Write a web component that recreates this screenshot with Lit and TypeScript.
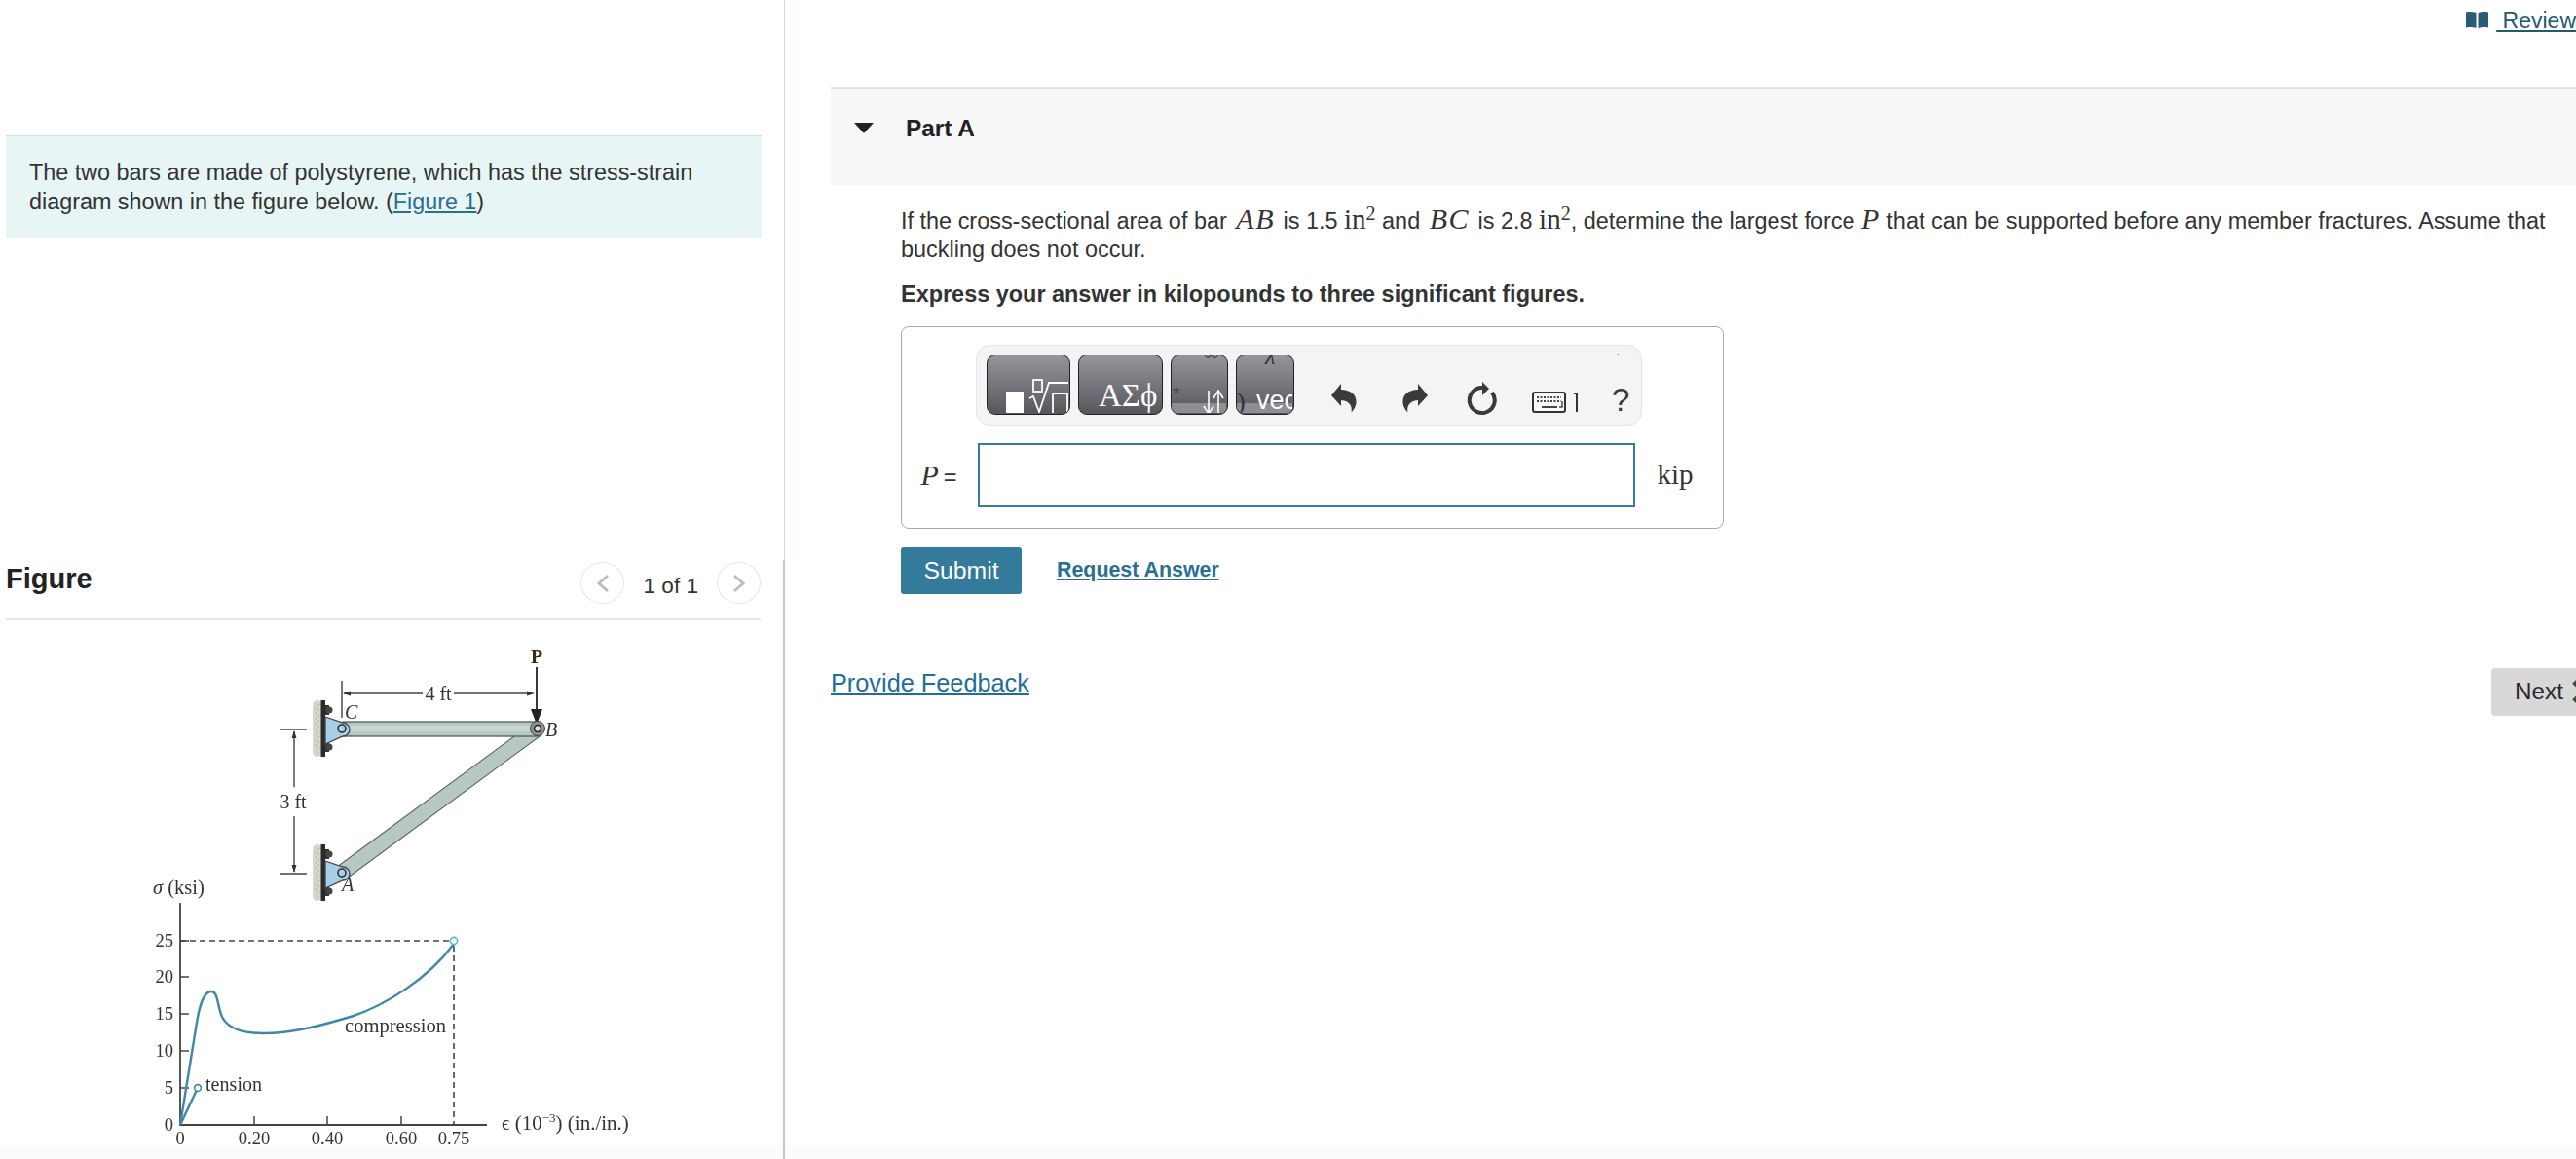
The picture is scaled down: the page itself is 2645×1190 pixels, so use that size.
import { LitElement, html, css, svg } from "lit";
import { customElement } from "lit/decorators.js";

const wall = (top: number) => svg`
  <rect x="321" y="${top + 1}" width="10" height="58" rx="5" fill="#d6d6cf"/>
  <path d="M324 ${top + 8}v44M327 ${top + 5}v50" stroke="#b5b5ae" stroke-width="1.4" stroke-dasharray="1.5 4"/>
  <rect x="329.5" y="${top + 1}" width="4.5" height="58" fill="#2b2b2b"/>
  <rect x="334" y="${top + 6}" width="4" height="10" fill="#333"/>
  <rect x="334" y="${top + 44}" width="4" height="10" fill="#333"/>
  <circle cx="338" cy="${top + 11}" r="3.5" fill="#444"/>
  <circle cx="338" cy="${top + 49}" r="3.5" fill="#444"/>
  <path d="M334 ${top + 18}L352 ${top + 24}A6.5 6.5 0 0 1 352 ${top + 38}L334 ${top + 46}Z" fill="#a9cfe6" stroke="#444" stroke-width="1.3"/>
  <circle cx="351" cy="${top + 30}" r="4" fill="none" stroke="#333" stroke-width="1.6"/>
`;

@customElement("app-root")
export class AppRoot extends LitElement {
  static styles = css`
    :host {
      display: block;
      height: 100vh;
      overflow: hidden;
      font-family: "Liberation Sans", Arial, sans-serif;
      font-size: 23.45px;
      line-height: 29.8px;
      color: #333;
    }
    * { box-sizing: border-box; }
    a { color: #2a6f92; text-decoration: underline; }
    .page {
      display: flex;
      height: 100%;
      background: linear-gradient(#fff calc(100% - 13px), #fbfbfb calc(100% - 13px));
    }
    .left { width: 804px; flex: none; padding-top: 139px; }
    .divider { width: 2px; flex: none; display: flex; flex-direction: column; }
    .div-top { height: 575px; width: 1px; margin-left: 1px; background: #ccd6e0; }
    .div-bottom { flex: 1; width: 2px; background: #bccbdc; }
    .right { flex: 1; min-width: 0; padding-left: 47px; overflow: hidden; }

    .intro {
      margin-left: 6px;
      width: 776px;
      height: 105px;
      padding: 23px 24px 0;
      background: #e7f5f5;
      border-top: 1px solid #d7e4e4;
      font-size: 23.35px;
    }
    .fig-head {
      margin: 333px 0 0 6px;
      width: 775px;
      height: 60px;
      display: flex;
      border-bottom: 2px solid #e6e6e6;
    }
    .fig-head h2 {
      margin: 0 auto 0 0;
      font-size: 29px;
      line-height: 34px;
      font-weight: 700;
      color: #222;
    }
    .pager { display: flex; align-items: flex-start; gap: 19px; }
    .pager span { margin-top: 10px; color: #333; font-size: 22.6px; }
    .circle {
      width: 45px;
      height: 43px;
      border: 1px solid #e6e6e6;
      border-radius: 50%;
      display: flex;
      align-items: center;
      justify-content: center;
    }
    .figure { display: block; margin-top: 3px; }
    .blur { filter: blur(0.7px); }
    .s { font-family: "Liberation Serif", serif; fill: #333; }

    .review-row {
      height: 89px;
      display: flex;
      justify-content: flex-end;
      align-items: flex-start;
      padding-top: 7px;
      font-size: 23px;
      line-height: 28px;
    }
    .review-row svg { margin: 5px 8px 0 0; }
    .review-row a { color: #25596f; white-space: pre; }

    .part-head {
      height: 101px;
      background: #f8f8f8;
      border-top: 2px solid #e2e2e2;
      display: flex;
      padding: 26px 0 0 24px;
      font-weight: 700;
      font-size: 24.4px;
      color: #222;
    }
    .part-head svg { margin: 9px 33px 0 0; }

    .body { padding: 22.5px 25px 0 72px; }
    .body p { margin: 0; color: #333; white-space: normal; }
    .strong { margin-top: 16px !important; font-weight: 700; }
    .m { font-family: "Liberation Serif", serif; font-style: italic; font-size: 30px; letter-spacing: 1.5px; line-height: 0; margin: 0 2px 0 3px; }
    .m.p { margin: 0; }
    .u { font-family: "Liberation Serif", serif; font-size: 29px; line-height: 0; }
    sup { font-family: "Liberation Serif", serif; font-size: 20px; line-height: 0; }

    .answer {
      margin-top: 17px;
      width: 845px;
      height: 208px;
      border: 1.5px solid #aaa;
      border-radius: 8px;
      padding: 18.5px 0 0 75.5px;
    }
    .toolbar {
      width: 684px;
      height: 83px;
      background: #f4f4f4;
      border: 1px solid #e5e5e5;
      border-radius: 14px;
      padding: 9px 0 0 10px;
      display: flex;
    }
    .btn {
      height: 62px;
      flex: none;
      margin-right: 8px;
      border: 1.5px solid #222;
      border-radius: 9px;
      overflow: hidden;
      background: linear-gradient(#96959d, #56565a);
      display: block;
    }
    .btn svg { display: block; }
    .b1 { width: 86px; }
    .b2 { width: 87px; }
    .b3 { width: 59px; }
    .b4 { width: 60px; margin-right: 0; }
    .ic { flex: none; display: block; overflow: visible; }
    .undo { margin-left: 38px; }
    .redo { margin-left: 47px; }
    .reset { margin-left: 41px; }
    .kbd { margin-left: 36px; }
    .help { margin-left: 35px; }
    .help text { font-family: "Liberation Sans", sans-serif; font-size: 33px; fill: #3a3a3a; }

    .eq { display: flex; align-items: center; margin: 18px 0 0 -56px; height: 66px; }
    .eq-l { width: 58px; font-family: "Liberation Serif", serif; font-size: 30px; color: #333; white-space: nowrap; }
    .eq-l i { margin-right: 5px; }
    .eq-l b { font: 400 23.6px "Liberation Sans", sans-serif; }
    .input { width: 675px; height: 66px; border: 2px solid #3a7a9c; background: #fff; }
    .unit { margin-left: 23px; font-family: "Liberation Serif", serif; font-size: 29px; color: #333; }

    .actions { display: flex; align-items: center; gap: 36px; margin-top: 19px; }
    .submit {
      width: 124px;
      height: 48px;
      background: #337a9b;
      border-radius: 3px;
      color: #fff;
      font-size: 24.8px;
      display: flex;
      align-items: center;
      justify-content: center;
    }
    .req { font-weight: 700; font-size: 21.4px; }

    .foot { display: flex; justify-content: space-between; align-items: flex-start; margin-top: 76px; }
    .foot a { font-size: 25.3px; color: #1f6d99; line-height: 30px; }
    .next {
      width: 112px;
      height: 49px;
      margin: 0 -25px 0 0;
      flex: none;
      background: #d8d8d8;
      border-radius: 4px;
      display: flex;
      align-items: center;
      padding-left: 24px;
      gap: 8px;
      font-size: 24.3px;
      color: #2b2b2b;
    }
  `;

  render() {
    return html`
      <div class="page">
        <div class="left">
          <div class="intro">
            The two bars are made of polystyrene, which has the stress-strain diagram shown in the figure below. (<a href="#">Figure 1</a>)
          </div>
          <div class="fig-head">
            <h2>Figure</h2>
            <div class="pager">
              <div class="circle">
                <svg width="14" height="20" viewBox="0 0 14 20"><path d="M12 2L3 10l9 8" fill="none" stroke="#bdbdbd" stroke-width="3"/></svg>
              </div>
              <span>1 of 1</span>
              <div class="circle">
                <svg width="14" height="20" viewBox="0 0 14 20"><path d="M2 2l9 8-9 8" fill="none" stroke="#bdbdbd" stroke-width="3"/></svg>
              </div>
            </div>
          </div>
          ${this.figure()}
        </div>
        <div class="divider"><div class="div-top"></div><div class="div-bottom"></div></div>
        <div class="right">
          <div class="review-row">
            <svg width="23" height="17" viewBox="0 0 23 17">
              <path d="M0 0.5C3 -0.2 7 -0.2 10.5 1V17C7 15.8 3 15.8 0 16.5ZM23 0.5C20 -0.2 16 -0.2 12.5 1V17C16 15.8 20 15.8 23 16.5Z" fill="#285d75"/>
            </svg>
            <a href="#"> Review</a>
          </div>
          <div class="part-head">
            <svg width="20" height="11" viewBox="0 0 20 11"><path d="M0 0H20L10 11Z" fill="#222"/></svg>
            Part A
          </div>
          <div class="body">
            <p>If the cross-sectional area of bar <span class="m">AB</span> is 1.5 <span class="u">in</span><sup>2</sup> and <span class="m">BC</span> is 2.8 <span class="u">in</span><sup>2</sup>, determine the largest force <span class="m p">P</span> that can be supported before any member fractures. Assume that buckling does not occur.</p>
            <p class="strong">Express your answer in kilopounds to three significant figures.</p>
            <div class="answer">
              ${this.toolbar()}
              <div class="eq">
                <div class="eq-l"><i>P</i><b>=</b></div>
                <div class="input"></div>
                <div class="unit">kip</div>
              </div>
            </div>
            <div class="actions">
              <div class="submit">Submit</div>
              <a class="req" href="#">Request Answer</a>
            </div>
          </div>
          <div class="foot">
            <a href="#">Provide Feedback</a>
            <div class="next">Next
              <svg width="18" height="24" viewBox="0 0 18 24"><path d="M3 2l10 10L3 22" fill="none" stroke="#444" stroke-width="5"/></svg>
            </div>
          </div>
        </div>
      </div>
    `;
  }

  toolbar() {
    return html`
      <div class="toolbar">
        <div class="btn b1">
          <svg width="83" height="59" viewBox="0 0 83 59">
            <rect x="19" y="37" width="18" height="24" fill="#fff"/>
            <rect x="47" y="25" width="9" height="12" fill="none" stroke="#fff" stroke-width="1.8"/>
            <path d="M43 44l4 -2l6 16l10 -30h20" fill="none" stroke="#fff" stroke-width="1.8"/>
            <path d="M67 60V39H82V60" fill="none" stroke="#fff" stroke-width="1.8"/>
          </svg>
        </div>
        <div class="btn b2">
          <svg width="84" height="59" viewBox="0 0 84 59">
            <text x="20" y="52" font-family="Liberation Serif" font-size="33" fill="#fff">ΑΣϕ</text>
          </svg>
        </div>
        <div class="btn b3">
          <svg width="56" height="59" viewBox="0 0 56 59">
            <rect x="0" y="49" width="56" height="10" fill="#8f8e95"/>
            <text x="33" y="5" font-family="Liberation Serif" font-size="22" fill="#333">∞</text>
            <text x="1" y="46" font-family="Liberation Sans" font-size="20" fill="#444">*</text>
            <path d="M38 36V60M33 52l5 8 5-8M48 60V36M43 44l5-8 5 8" fill="none" stroke="#fff" stroke-width="1.6"/>
          </svg>
        </div>
        <div class="btn b4">
          <svg width="57" height="59" viewBox="0 0 57 59">
            <rect x="0" y="49" width="57" height="10" fill="#8f8e95"/>
            <text x="0" y="56" font-family="Liberation Serif" font-size="26" fill="#333">)</text>
            <text x="29" y="9" font-family="Liberation Serif" font-style="italic" font-size="24" fill="#333">λ</text>
            <text x="20" y="55" font-family="Liberation Sans" font-size="27" fill="#fff">vec</text>
          </svg>
        </div>
        <svg class="ic undo" width="26" height="62" viewBox="0 0 26 62">
          <path d="M0 42L10 30V36C19 36 26 41 25.5 49C25.5 53 23 57 20.5 59.5C21.5 54 20 48 10 47V53Z" fill="#3a3a3a"/>
        </svg>
        <svg class="ic redo" width="26" height="62" viewBox="0 0 26 62">
          <path transform="translate(26 0) scale(-1 1)" d="M0 42L10 30V36C19 36 26 41 25.5 49C25.5 53 23 57 20.5 59.5C21.5 54 20 48 10 47V53Z" fill="#3a3a3a"/>
        </svg>
        <svg class="ic reset" width="30" height="62" viewBox="0 0 30 62">
          <path d="M15 34A13 13 0 1 0 25 39" fill="none" stroke="#3a3a3a" stroke-width="4"/>
          <path d="M15 28L22 35L15 42Z" fill="#3a3a3a"/>
        </svg>
        <svg class="ic kbd" width="47" height="62" viewBox="0 0 47 62">
          <rect x="1" y="39" width="33" height="20" rx="2" fill="#fafafa" stroke="#333" stroke-width="2"/>
          <path d="M5 44H30M5 48H30" stroke="#444" stroke-width="2" stroke-dasharray="2 1.5"/>
          <path d="M10 54H26" stroke="#444" stroke-width="2"/>
          <path d="M28 54H31V48" fill="none" stroke="#444" stroke-width="1.5"/>
          <path d="M43 40H46V59" fill="none" stroke="#333" stroke-width="2"/>
        </svg>
        <svg class="ic help" width="18" height="62" viewBox="0 0 18 62">
          <rect x="5.5" y="-0.5" width="1.5" height="1.5" fill="#333"/>
          <text x="0" y="58">?</text>
        </svg>
      </div>
    `;
  }

  figure() {
    const yTicks: [string, number][] = [["25", 966], ["20", 1003], ["15", 1041], ["10", 1079], ["5", 1117]];
    const xTicks: [string, number][] = [["0.20", 261], ["0.40", 336], ["0.60", 412]];
    return html`
      <svg class="figure" width="804" height="550" viewBox="0 640 804 550">
        <g class="blur">
          <text class="s" x="551" y="681" text-anchor="middle" font-size="20" font-weight="700" style="fill:#3a2a1a">P</text>
          <path d="M551 685V730" stroke="#222" stroke-width="1.8"/>
          <path d="M545 728H557L551 744Z" fill="#222"/>
          <path d="M351 699V737" stroke="#333" stroke-width="1.3"/>
          <path d="M353 712H434M466 712H546" stroke="#444" stroke-width="1.4"/>
          <path d="M352 712l8 -2.5v5ZM549 712l-8 -2.5v5Z" fill="#333"/>
          <text class="s" x="450" y="719" text-anchor="middle" font-size="20">4 ft</text>

          <path d="M287 749H315M287 897H315" stroke="#444" stroke-width="1.5"/>
          <path d="M302 751V808M302 838V895" stroke="#444" stroke-width="1.4"/>
          <path d="M302 750l-2.5 8h5ZM302 896l-2.5 -8h5Z" fill="#333"/>
          <text class="s" x="301" y="830" text-anchor="middle" font-size="20">3 ft</text>

          <path d="M351 896L552 748" stroke="#5a5f5d" stroke-width="16.5"/>
          <path d="M351 896L552 748" stroke="#b7c7c3" stroke-width="14.5"/>
          <rect x="352" y="741" width="200" height="15" fill="#b7c7c3" stroke="#4c4f4e" stroke-width="1.2"/>
          <rect x="352" y="745" width="200" height="6" fill="#c8d5d2"/>
          ${wall(718)}
          ${wall(866)}
          <circle cx="552" cy="748" r="7.5" fill="#8d9492" stroke="#444"/>
          <circle cx="552" cy="748" r="3.5" fill="#ddd" stroke="#222" stroke-width="1.6"/>
          <g class="s" font-size="20" font-style="italic">
            <text x="354" y="738">C</text>
            <text x="560" y="756">B</text>
            <text x="351" y="915">A</text>
          </g>

          <text class="s" x="157" y="918" font-size="20.5"><tspan font-style="italic">σ</tspan> (ksi)</text>
          <path d="M185 927V1155H500" fill="none" stroke="#444" stroke-width="1.8"/>
          ${yTicks.map(([t, y]) => svg`
            <path d="M185 ${y}H194" stroke="#444" stroke-width="1.5"/>
            <text class="s" x="178" y="${y + 6}" text-anchor="end" font-size="18.5">${t}</text>`)}
          <text class="s" x="178" y="1161" text-anchor="end" font-size="18.5">0</text>
          ${xTicks.map(([t, x]) => svg`
            <path d="M${x} 1146V1155" stroke="#444" stroke-width="1.5"/>
            <text class="s" x="${x}" y="1175" text-anchor="middle" font-size="18.5">${t}</text>`)}
          <text class="s" x="185" y="1175" text-anchor="middle" font-size="18.5">0</text>
          <text class="s" x="466" y="1175" text-anchor="middle" font-size="18.5">0.75</text>
          <path d="M185 966H462M466 971V1155" fill="none" stroke="#444" stroke-width="1.6" stroke-dasharray="6 4"/>
          <path d="M185 1155L203 1117" fill="none" stroke="#3e88a6" stroke-width="2.4"/>
          <circle cx="203" cy="1117" r="3.4" fill="#fff" stroke="#3e88a6" stroke-width="1.6"/>
          <path d="M185 1155L202 1050C205 1032 209 1018 217 1018C224 1018 223 1033 228 1044C232 1052 243 1061 270 1061C300 1061 330 1053 363 1043C395 1032 440 1005 466 969" fill="none" stroke="#3e88a6" stroke-width="2.4"/>
          <circle cx="466" cy="966" r="3.6" fill="#fff" stroke="#55b6dc" stroke-width="1.6"/>
          <text class="s" x="354" y="1060" font-size="20.5" textLength="104">compression</text>
          <text class="s" x="211" y="1120" font-size="20" textLength="58">tension</text>
          <text class="s" x="515" y="1160" font-size="21">ϵ (10<tspan dy="-8" font-size="13">−3</tspan><tspan dy="8">) (in./in.)</tspan></text>
        </g>
      </svg>
    `;
  }
}
